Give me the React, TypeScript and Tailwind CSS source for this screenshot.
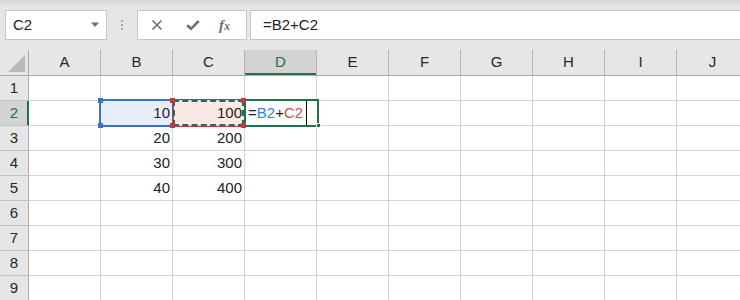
const COLS = ['A', 'B', 'C', 'D', 'E', 'F', 'G', 'H', 'I', 'J'];
const ROWS = [1, 2, 3, 4, 5, 6, 7, 8, 9];

const values: Record<string, string> = {
  B2: '10', C2: '100',
  B3: '20', C3: '200',
  B4: '30', C4: '300',
  B5: '40', C5: '400',
};

const fills: Record<string, string> = {
  B2: 'bg-[#e8eef9]',
  C2: 'bg-[#fae9e7]',
};

const Handle = ({ x, y, color }: { x: number; y: number; color: string }) => (
  <div className={`absolute w-[5px] h-[5px] ${color}`} style={{ left: x - 2, top: y - 2 }} />
);

const FormulaToolbar = () => (
  <div className="h-[50px] flex items-start pt-[10px] bg-[linear-gradient(#d3d3d3,#e6e6e6_7px)]">
    {/* Name box */}
    <div className="ml-[5px] w-[102px] h-[30px] bg-white border border-[#c6c6c6] flex items-center pl-[7px] pr-[6px]">
      <span className="text-[15px] text-[#222]">C2</span>
      <svg className="ml-auto" width="9" height="6" viewBox="0 0 9 6">
        <path d="M0 0.5 H8 L4 5 Z" fill="#707070" />
      </svg>
    </div>
    <div className="w-[30px] h-[30px] flex flex-col items-center justify-center gap-[2px]">
      <div className="w-[2px] h-[2px] bg-[#a8a8a8]" />
      <div className="w-[2px] h-[2px] bg-[#a8a8a8]" />
      <div className="w-[2px] h-[2px] bg-[#a8a8a8]" />
    </div>
    {/* Cancel / enter / function */}
    <div className="w-[110px] h-[30px] bg-white border border-[#c6c6c6] flex items-center">
      <svg className="ml-[13px]" width="12" height="12" viewBox="0 0 12 12">
        <path d="M1.5 1.5 L10.5 10.5 M10.5 1.5 L1.5 10.5" stroke="#6f6f6f" strokeWidth="1.6" />
      </svg>
      <svg className="ml-[23px]" width="14" height="12" viewBox="0 0 14 12">
        <path d="M1.2 6.2 L5 9.8 L12.8 2" stroke="#6f6f6f" strokeWidth="2.6" fill="none" />
      </svg>
      <span className="ml-[19px] font-['Liberation_Serif',serif] italic font-bold text-[15px] text-[#6f6f6f] leading-none">
        f<span className="text-[12px]">x</span>
      </span>
    </div>
    {/* Formula input */}
    <div className="ml-[3px] flex-1 h-[30px] bg-white border-y border-l border-[#c6c6c6] flex items-center pl-[12px]">
      <span className="text-[15px] text-[#222]">=B2+C2</span>
    </div>
  </div>
);

export default function App() {
  return (
    <div className="relative w-[740px] h-[300px] overflow-hidden bg-white font-['Liberation_Sans',sans-serif]">
      <FormulaToolbar />

      {/* Column header */}
      <div className="flex h-[26px] bg-[#e6e6e6] border-b border-[#ababab]">
        <div className="w-[29px] shrink-0 border-r border-[#ababab] relative">
          <svg className="absolute left-[8px] top-[5px]" width="17" height="17" viewBox="0 0 17 17">
            <path d="M17 0 V17 H0 Z" fill="#b9b9b9" />
          </svg>
        </div>
        {COLS.map(c => (
          <div
            key={c}
            className={`w-[72px] shrink-0 border-r border-[#b5b5b5] flex items-center justify-center text-[15px] ${
              c === 'D' ? 'bg-[#d3d3d3] text-[#217346] shadow-[inset_0_-2px_0_#217346]' : 'text-[#262626]'
            }`}
          >
            {c}
          </div>
        ))}
      </div>

      {/* Rows */}
      {ROWS.map(r => (
        <div key={r} className="flex h-[25px]">
          <div
            className={`w-[29px] shrink-0 border-b border-r flex items-center justify-center text-[15px] ${
              r === 2
                ? 'bg-[#d3d3d3] text-[#217346] border-b-[#c4c4c4] border-r-[#217346] shadow-[inset_-1px_0_0_#217346]'
                : 'bg-[#e6e6e6] text-[#262626] border-b-[#c4c4c4] border-r-[#ababab]'
            }`}
          >
            {r}
          </div>
          {COLS.map(c => {
            const id = `${c}${r}`;
            return (
              <div
                key={id}
                className={`w-[72px] shrink-0 border-b border-r border-[#d4d4d4] flex items-center justify-end pr-[2px] text-[15px] text-[#222] ${fills[id] ?? ''}`}
              >
                {values[id]}
              </div>
            );
          })}
        </div>
      ))}

      {/* B2 reference range */}
      <div className="absolute left-[99px] top-[99px] w-[75px] h-[28px] border-2 border-[#3d6fc6]" />
      {/* C2 reference range */}
      <div className="absolute left-[172px] top-[99px] w-[73px] h-[28px] border border-[#c0393e]" />
      <div className="absolute left-[173px] top-[100px] w-[71px] h-[26px] border-2 border-dashed border-[#217346]" />
      {/* Active cell D2 */}
      <div className="absolute left-[244px] top-[99px] w-[75px] h-[28px] border-2 border-[#217346] flex items-center pl-[2px] text-[15px] bg-white">
        <span className="text-[#222]">=</span>
        <span className="text-[#3b7bd8]">B2</span>
        <span className="text-[#222]">+</span>
        <span className="text-[#d9464b]">C2</span>
        <span className="ml-[3px] w-[1px] h-[24px] bg-black" />
      </div>
      <div className="absolute left-[316px] top-[123px] w-[5px] h-[5px] bg-[#217346] border border-white" />

      <Handle x={100} y={100} color="bg-[#3d6fc6]" />
      <Handle x={100} y={125} color="bg-[#3d6fc6]" />
      <Handle x={172} y={100} color="bg-[#c0393e]" />
      <Handle x={172} y={125} color="bg-[#c0393e]" />
      <Handle x={243} y={100} color="bg-[#c0393e]" />
      <Handle x={243} y={125} color="bg-[#c0393e]" />
    </div>
  );
}
